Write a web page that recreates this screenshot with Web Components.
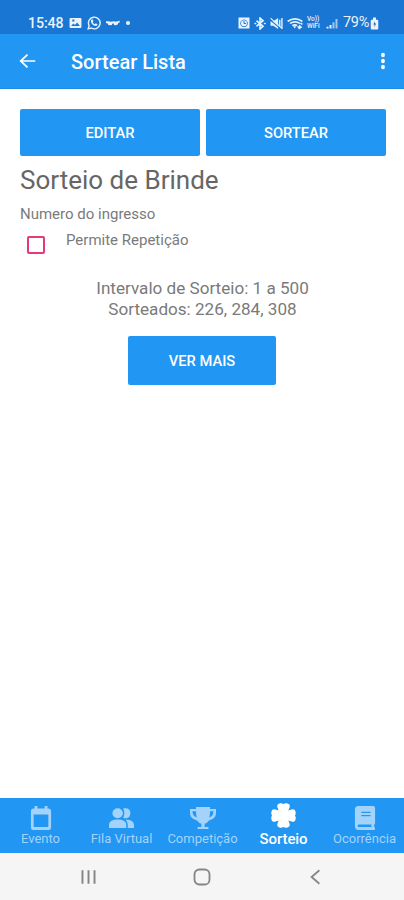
<!DOCTYPE html>
<html lang="pt-BR">
<head>
<meta charset="utf-8">
<title>Sortear Lista</title>
<style>
html, body{
  margin: 0;
  height: 100%;
}
body{
  font-family: Roboto, "Liberation Sans", sans-serif;
  background: #fff;
  overflow: hidden;
}
</style>
</head>
<body>
<sorteio-app></sorteio-app>
<script>
const icons = {
  image: `<path fill="currentColor" fill-rule="evenodd" d="M3 2h18q2 0 2 2v16q0 2-2 2H3q-2 0-2-2V4q0-2 2-2zM4 18h16l-5-7-4 5-3-3zM6 5v4h4V5z"/>`,
  whatsapp: `<path fill="none" stroke="currentColor" stroke-width="2.4" d="M2 22l1.6-5.5A10 10 0 1 1 7.5 20.600z"/><path fill="currentColor" d="M8 6l2 0 1 3-1.200 1.500q1.200 2.500 3.700 3.500l1.500-1.500 3 1.500q0 3-3 3-7-1-8.500-8 0-2 1.500-3z"/>`,
  glasses: `<path fill="currentColor" d="M0 7h5l2 1 7-1 2 1 8-2-1 4-2 1-1 3-3 2-3-1-1-3-2 0-1 3-3 1-3-1-1-3-3-1z"/>`,
  alarm: `<path fill="currentColor" fill-rule="evenodd" d="M1 1h22v22H1zM12 5a7.500 7.500 0 1 0 .1 0z"/><circle cx="12" cy="12.500" r="6" fill="currentColor"/><path fill="none" stroke="#1976d2" stroke-width="2" d="M12 8v5h4"/>`,
  bluetooth: `<path fill="none" stroke="currentColor" stroke-width="3.200" d="M5 7l13 10-6 5V2l6 5L5 17"/><path fill="currentColor" d="M0 12l3-2 2 2-2 2zM19 12l3-2 2 2-2 2z"/>`,
  mute: `<path fill="currentColor" d="M1 8h5l9-6v20l-9-6H1z"/><path fill="none" stroke="currentColor" stroke-width="2.500" d="M18 5v14M22 2v20"/><path stroke="#1976d2" stroke-width="2" d="M0 5l20 17"/><path stroke="currentColor" stroke-width="2" d="M1 2l21 19"/>`,
  wifi: `<path fill="none" stroke="currentColor" stroke-width="2.900" d="M1 8q11-9 22 0M4.500 12q7.500-6 15 0M8 16q4-3 7 0"/><path fill="currentColor" d="M9 17h5l-2.500 4zM15 17h3v-3l5 5-5 4zM19 12l4 3v-5z"/>`,
  signal: `<path fill="currentColor" d="M1 19h4v4H1zM7 15h4v8H7z"/><path fill="currentColor" opacity=".65" d="M13 9h4v14h-4zM19 2h4v21h-4z"/>`,
  battery: `<path fill="currentColor" d="M8 1h8v4h4q2 0 2 2v14q0 2-2 2H4q-2 0-2-2V7q0-2 2-2h4z"/><path fill="#3c5875" d="M13 8l-4 6h3v5l4-7h-3z"/>`,
  back: `<path fill="none" stroke="currentColor" stroke-width="2.600" d="M23 12H3M12 2.500L2.500 12l9.500 9.500"/>`,
  dots: `<circle cx="12" cy="4" r="2.900" fill="currentColor"/><circle cx="12" cy="12" r="2.900" fill="currentColor"/><circle cx="12" cy="20" r="2.900" fill="currentColor"/>`,
  calendar: `<path fill="currentColor" fill-rule="evenodd" d="M5 0h3v2.500h8V0h3v2.500h1.500q2.500 0 2.500 2.500v16.500q0 2.500-2.500 2.500h-17Q1 24 1 21.500V5q0-2.500 2.500-2.500H5zM4 8.500V20q0 1 1 1h14q1 0 1-1V8.500z"/>`,
  people: `<circle cx="8.300" cy="7.300" r="5" fill="currentColor"/><path fill="currentColor" d="M13.500 2.600q7-1.300 7 4.700t-7 4.700q2.500-4.700 0-9.400zM0 22v-3q0-5.500 8.300-5.500t8.300 5.500v3zM16 13.500q8 .3 8 5.500v3h-6v-3q0-3-2-5.500z"/>`,
  trophy: `<path fill="currentColor" fill-rule="evenodd" d="M5.500 1h13v2H24v4q0 5.500-6.500 7.500-1.500 2.500-4 3.300V21H17v2H7v-2h3.500v-3.200q-2.500-.8-4-3.300Q0 12.500 0 7V3h5.500zM5.500 5.200H2.300Q2.300 10 6.300 11.500 5.500 9 5.500 5.200zM18.500 5.200h3.200q0 4.800-4 6.300.8-2.500.8-6.300z"/>`,
  clover: `<path fill="currentColor" d="M9 .3q1.500-.3 3 .7 1.500-1 3-.7 3.300.5 3 3.200l-1.300 3.800L20.500 6q2.700-.3 3.200 3 .3 1.500-.7 3 1 1.500.7 3-.5 3.300-3.200 3l-3.800-1.300L18 20.500q.3 2.700-3 3.200-1.500.3-3-.7-1.500 1-3 .7-3.300-.5-3-3.200l1.300-3.800L3.500 18q-2.700.3-3.200-3-.3-1.500.7-3-1-1.500-.7-3 .5-3.300 3.200-3l3.800 1.300L6 3.500Q5.700.800 9 .3z"/>`,
  book: `<path fill="currentColor" fill-rule="evenodd" d="M4.500 0H21q2 0 2 2v15q0 1-1 1.500V21q1 0 1 1.500T22 24H5q-4 0-4-4V4q0-4 3.500-4zM5 18.500q-1 0-1 1.200T5 21h14v-2.500zM8 5.700V7h10V5.700zM8 9v1.300h10V9z"/>`,
  recents: `<path stroke="currentColor" stroke-width="2.700" d="M3.500 2v20M12 2v20M20.500 2v20"/>`,
  home: `<rect x="2" y="2" width="20" height="20" rx="6.500" fill="none" stroke="currentColor" stroke-width="2.400"/>`,
  chevron: `<path fill="none" stroke="currentColor" stroke-width="2.500" d="M17.500 3L6.500 12l11 9"/>`,
}

// small helper, every element here is only markup + style
const define = (tagName, createHTML) => {
  customElements.define(tagName, class extends HTMLElement {
    connectedCallback(){
      if(this.shadowRoot){ return }
      this.shadow = this.attachShadow({mode: 'open'})
      this.shadow.innerHTML = createHTML(this)
    }
  })
}

define("ui-icon", (elem) => {
  const w = elem.getAttribute("w")
  const h = elem.getAttribute("h") || w
  return `
<style>
:host{
  display: block;
  flex: none;
  width: ${w}px;
  height: ${h}px;
}
svg{ display: block; width: 100%; height: 100%; }
</style>
<svg viewBox="0 0 24 24" preserveAspectRatio="none">${icons[elem.getAttribute("name")]}</svg>
`})

define("status-bar", () => `
<style>
:host{
  display: flex;
  justify-content: space-between;
  box-sizing: border-box;
  height: 34px;
  padding: 13px 25px 0 28px;
  background: #1976d2;
  color: #e9f3fd;
  font-size: 14.5px;
  line-height: 20px;
}
div{ display: flex; align-items: center; height: 20px; }
.left{ gap: 5px; }
.time{
  width: 41px;
  margin-right: -5px;
  font-size: 14.2px;
  font-weight: 500;
  letter-spacing: -0.1px;
}
.dot{ width: 4px; height: 4px; border-radius: 2px; background: currentColor; margin-left: 1px; }
.right{ gap: 4px; }
.net{
  display: block;
  width: 15px;
  height: 14px;
  font-size: 6.5px;
  line-height: 7px;
  font-weight: 500;
}
.net span{ display: block; }
.pct{ margin-left: 1px; letter-spacing: -0.3px; }
.pct + ui-icon{ margin-left: -3px; }
</style>
<div class="left">
  <span class="time">15:48</span>
  <ui-icon name="image" w="13" h="12"></ui-icon>
  <ui-icon name="whatsapp" w="14"></ui-icon>
  <ui-icon name="glasses" w="14" h="11"></ui-icon>
  <span class="dot"></span>
</div>
<div class="right">
  <ui-icon name="alarm" w="12"></ui-icon>
  <ui-icon name="bluetooth" w="12" h="13"></ui-icon>
  <ui-icon name="mute" w="13"></ui-icon>
  <ui-icon name="wifi" w="16" h="13"></ui-icon>
  <div class="net"><span>Vo))</span><span>WiFi</span></div>
  <ui-icon name="signal" w="12" h="11"></ui-icon>
  <span class="pct">79%</span>
  <ui-icon name="battery" w="9" h="13"></ui-icon>
</div>
`)

define("app-bar", () => `
<style>
:host{
  display: flex;
  align-items: center;
  box-sizing: border-box;
  height: 55px;
  padding: 0 13px 0 19px;
  background: #2196f3;
  border-bottom: 1px solid #1c8ce4;
  color: #fff;
}
h1{
  flex: 1;
  margin: 2px 0 0 35px;
  font-size: 20px;
  line-height: 24px;
  font-weight: 500;
}
</style>
<ui-icon name="back" w="17" h="16"></ui-icon>
<h1><slot></slot></h1>
<ui-icon name="dots" w="16" h="18"></ui-icon>
`)

define("flat-button", () => `
<style>
:host{ display: block; }
button{
  display: block;
  width: 100%;
  height: 100%;
  padding: 0;
  border: 0;
  border-radius: 2px;
  background: #2196f3;
  color: #fff;
  font: 500 14.7px/18px Roboto, "Liberation Sans", sans-serif;
}
</style>
<button><slot></slot></button>
`)

define("check-option", () => `
<style>
:host{
  display: flex;
  align-items: flex-start;
  height: 24px;
  font-size: 15px;
  line-height: 18px;
}
i{
  box-sizing: border-box;
  width: 18px;
  height: 18px;
  margin: 5px 21px 0 7px;
  border: 2px solid #e5397a;
  border-radius: 2px;
}
</style>
<i></i><span><slot></slot></span>
`)

define("tab-item", () => `
<style>
:host{
  display: flex;
  flex-direction: column;
  align-items: center;
  width: 81px;
  flex: none;
  box-sizing: border-box;
  padding-top: 8px;
  color: #a3d3fa;
  font-size: 13px;
  line-height: 16px;
  white-space: nowrap;
}
:host([active]){
  padding-top: 5px;
  color: #fff;
  font-size: 15px;
  font-weight: 500;
}
span{ margin-top: 1px; }
:host([active]) span{ margin-top: 3px; letter-spacing: -0.1px; }
</style>
<slot name="icon"></slot>
<span><slot></slot></span>
`)

define("tab-bar", () => `
<style>
:host{
  display: flex;
  height: 55px;
  background: #2196f3;
}
</style>
<slot></slot>
`)

define("nav-bar", () => `
<style>
:host{
  display: flex;
  align-items: center;
  justify-content: space-between;
  box-sizing: border-box;
  height: 47px;
  padding: 0 80px;
  background: #f5f5f5;
  color: #858585;
}
</style>
<ui-icon name="recents" w="17" h="16"></ui-icon>
<ui-icon name="home" w="18" h="18"></ui-icon>
<ui-icon name="chevron" w="17" h="18"></ui-icon>
`)

define("sorteio-app", () => `
<style>
:host{
  display: flex;
  flex-direction: column;
  width: 404px;
  height: 900px;
  color: #7a7a7a;
}
main{
  flex: 1;
  padding: 20px 19px 0 20px;
}
.actions{
  display: grid;
  grid-template-columns: 180px 180px;
  gap: 6px;
  height: 47px;
}
h2{
  margin: 8px 0 0;
  font-size: 26px;
  line-height: 32px;
  font-weight: 400;
  color: #666;
}
.desc{
  margin: 9px 0 8px;
  font-size: 15px;
  line-height: 18px;
}
.result{
  margin: 23px 0 17px;
  font-size: 17.1px;
  line-height: 20.5px;
  text-align: center;
}
.more{ width: 148px; height: 49px; margin: 0 auto 0 108px; }
</style>
<status-bar></status-bar>
<app-bar>Sortear Lista</app-bar>
<main>
  <div class="actions">
    <flat-button>EDITAR</flat-button>
    <flat-button>SORTEAR</flat-button>
  </div>
  <h2>Sorteio de Brinde</h2>
  <p class="desc">Numero do ingresso</p>
  <check-option>Permite Repetição</check-option>
  <p class="result">Intervalo de Sorteio: 1 a 500<br>Sorteados: 226, 284, 308</p>
  <flat-button class="more">VER MAIS</flat-button>
</main>
<tab-bar>
  <tab-item><ui-icon slot="icon" name="calendar" w="22" h="24"></ui-icon>Evento</tab-item>
  <tab-item><ui-icon slot="icon" name="people" w="25" h="24"></ui-icon>Fila Virtual</tab-item>
  <tab-item><ui-icon slot="icon" name="trophy" w="26" h="24"></ui-icon>Competição</tab-item>
  <tab-item active><ui-icon slot="icon" name="clover" w="25" h="25"></ui-icon>Sorteio</tab-item>
  <tab-item><ui-icon slot="icon" name="book" w="22" h="24"></ui-icon>Ocorrência</tab-item>
</tab-bar>
<nav-bar></nav-bar>
`)
</script>
</body>
</html>
